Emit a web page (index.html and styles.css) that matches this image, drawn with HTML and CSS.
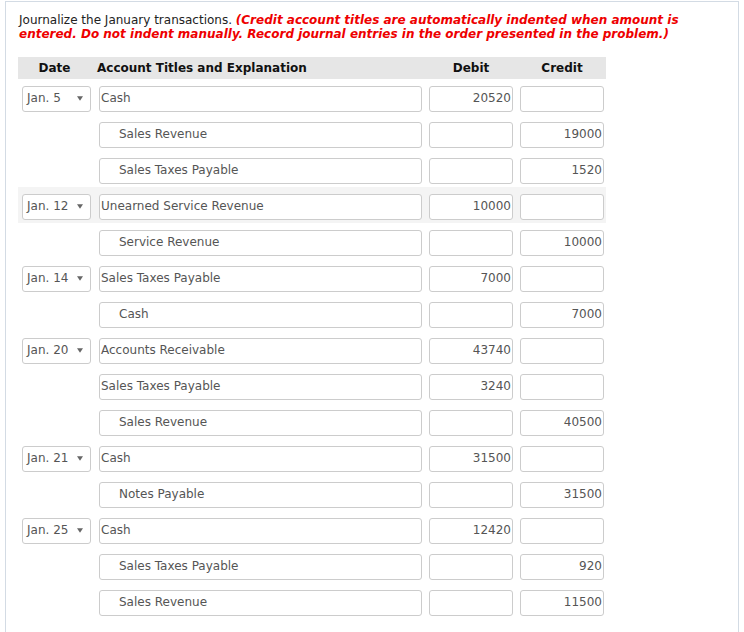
FILE: index.html
```html
<!DOCTYPE html>
<html>
<head>
<meta charset="utf-8">
<link rel="stylesheet" href="styles.css">
</head>
<body>
<div class="panel">
  <p class="prompt">Journalize the January transactions. <em class="note">(Credit account titles are automatically indented when amount is<br>entered. Do not indent manually. Record journal entries in the order presented in the problem.)</em></p>
  <div class="journal">
    <div class="row head">
      <div class="cell c-date">Date</div>
      <div class="cell c-acct">Account Titles and Explanation</div>
      <div class="cell c-num">Debit</div>
      <div class="cell c-num">Credit</div>
    </div>

    <div class="row">
      <div class="cell"><div class="select"><span>Jan. 5</span><svg class="arrow" width="7" height="5" viewBox="0 0 7 5"><path d="M0 0H7L3.5 5Z"/></svg></div></div>
      <div class="cell"><div class="box">Cash</div></div>
      <div class="cell"><div class="box num">20520</div></div>
      <div class="cell"><div class="box num"></div></div>
    </div>
    <div class="row">
      <div class="cell"></div>
      <div class="cell"><div class="box cr">Sales Revenue</div></div>
      <div class="cell"><div class="box num"></div></div>
      <div class="cell"><div class="box num">19000</div></div>
    </div>
    <div class="row">
      <div class="cell"></div>
      <div class="cell"><div class="box cr">Sales Taxes Payable</div></div>
      <div class="cell"><div class="box num"></div></div>
      <div class="cell"><div class="box num">1520</div></div>
    </div>

    <div class="row hover">
      <div class="cell"><div class="select"><span>Jan. 12</span><svg class="arrow" width="7" height="5" viewBox="0 0 7 5"><path d="M0 0H7L3.5 5Z"/></svg></div></div>
      <div class="cell"><div class="box">Unearned Service Revenue</div></div>
      <div class="cell"><div class="box num">10000</div></div>
      <div class="cell"><div class="box num"></div></div>
    </div>
    <div class="row">
      <div class="cell"></div>
      <div class="cell"><div class="box cr">Service Revenue</div></div>
      <div class="cell"><div class="box num"></div></div>
      <div class="cell"><div class="box num">10000</div></div>
    </div>

    <div class="row">
      <div class="cell"><div class="select"><span>Jan. 14</span><svg class="arrow" width="7" height="5" viewBox="0 0 7 5"><path d="M0 0H7L3.5 5Z"/></svg></div></div>
      <div class="cell"><div class="box">Sales Taxes Payable</div></div>
      <div class="cell"><div class="box num">7000</div></div>
      <div class="cell"><div class="box num"></div></div>
    </div>
    <div class="row">
      <div class="cell"></div>
      <div class="cell"><div class="box cr">Cash</div></div>
      <div class="cell"><div class="box num"></div></div>
      <div class="cell"><div class="box num">7000</div></div>
    </div>

    <div class="row">
      <div class="cell"><div class="select"><span>Jan. 20</span><svg class="arrow" width="7" height="5" viewBox="0 0 7 5"><path d="M0 0H7L3.5 5Z"/></svg></div></div>
      <div class="cell"><div class="box">Accounts Receivable</div></div>
      <div class="cell"><div class="box num">43740</div></div>
      <div class="cell"><div class="box num"></div></div>
    </div>
    <div class="row">
      <div class="cell"></div>
      <div class="cell"><div class="box">Sales Taxes Payable</div></div>
      <div class="cell"><div class="box num">3240</div></div>
      <div class="cell"><div class="box num"></div></div>
    </div>
    <div class="row">
      <div class="cell"></div>
      <div class="cell"><div class="box cr">Sales Revenue</div></div>
      <div class="cell"><div class="box num"></div></div>
      <div class="cell"><div class="box num">40500</div></div>
    </div>

    <div class="row">
      <div class="cell"><div class="select"><span>Jan. 21</span><svg class="arrow" width="7" height="5" viewBox="0 0 7 5"><path d="M0 0H7L3.5 5Z"/></svg></div></div>
      <div class="cell"><div class="box">Cash</div></div>
      <div class="cell"><div class="box num">31500</div></div>
      <div class="cell"><div class="box num"></div></div>
    </div>
    <div class="row">
      <div class="cell"></div>
      <div class="cell"><div class="box cr">Notes Payable</div></div>
      <div class="cell"><div class="box num"></div></div>
      <div class="cell"><div class="box num">31500</div></div>
    </div>

    <div class="row">
      <div class="cell"><div class="select"><span>Jan. 25</span><svg class="arrow" width="7" height="5" viewBox="0 0 7 5"><path d="M0 0H7L3.5 5Z"/></svg></div></div>
      <div class="cell"><div class="box">Cash</div></div>
      <div class="cell"><div class="box num">12420</div></div>
      <div class="cell"><div class="box num"></div></div>
    </div>
    <div class="row">
      <div class="cell"></div>
      <div class="cell"><div class="box cr">Sales Taxes Payable</div></div>
      <div class="cell"><div class="box num"></div></div>
      <div class="cell"><div class="box num">920</div></div>
    </div>
    <div class="row">
      <div class="cell"></div>
      <div class="cell"><div class="box cr">Sales Revenue</div></div>
      <div class="cell"><div class="box num"></div></div>
      <div class="cell"><div class="box num">11500</div></div>
    </div>
  </div>
</div>
</body>
</html>
```
FILE: styles.css
```css
html, body {
  margin: 0;
  padding: 0;
  background: #fff;
}
body {
  font-family: "DejaVu Sans", Verdana, sans-serif;
  font-size: 12px;
  color: #222;
}
.panel {
  margin: 1px 0 0 5px;
  width: 734px;
  height: 700px;
  border: 1px solid #d3dbe4;
  border-bottom: none;
  padding: 11px 0 0 12px;
  box-sizing: border-box;
}
.prompt {
  margin: 0 0 16px 1px;
  line-height: 14px;
  color: #222;
}
.note {
  color: #ee0000;
  font-weight: bold;
  font-style: italic;
}
.journal {
  width: 588px;
}
.row {
  display: grid;
  grid-template-columns: 77px 330px 91px 90px;
  height: 36px;
  box-sizing: border-box;
  padding-top: 7px;
}
.row.hover {
  background: #f4f4f4;
}
.row.head {
  height: 22px;
  padding-top: 0;
  background: #e6e6e6;
  font-weight: bold;
  color: #111;
  align-items: center;
}
.cell {
  padding-left: 4px;
}
.head .c-date {
  width: 69px;
  text-align: center;
  padding-left: 2px;
}
.head .c-acct {
  padding-left: 2px;
}
.head .c-num {
  width: 84px;
  text-align: center;
}
.box, .select {
  height: 26px;
  box-sizing: border-box;
  border: 1px solid #cccccc;
  border-radius: 3px;
  background: #fff;
  color: #555;
  line-height: 22px;
  padding-bottom: 2px;
  white-space: nowrap;
  overflow: hidden;
}
.box {
  width: 323px;
  padding-left: 1px;
}
.box.cr {
  padding-left: 19px;
}
.box.num {
  width: 84px;
  text-align: right;
  padding-right: 1px;
}
.select {
  width: 69px;
  display: flex;
  align-items: center;
  justify-content: space-between;
  padding: 0 7px 2px 4px;
}
.arrow {
  fill: #666;
  width: 6px;
  height: 5px;
}
```
